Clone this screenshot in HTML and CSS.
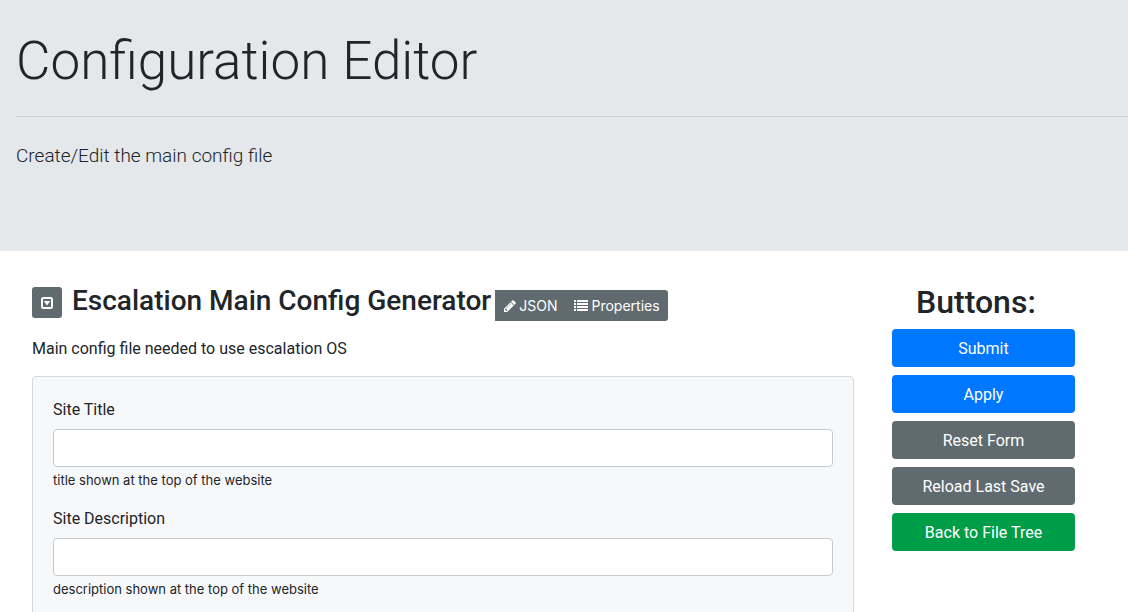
FILE: index.html
```
<!DOCTYPE html>
<html lang="en">
<head>
<meta charset="utf-8">
<title>Configuration Editor</title>
<link rel="stylesheet" href="styles.css">
</head>
<body>
<header class="jumbotron">
  <h1 class="display">Configuration Editor</h1>
  <hr class="rule">
  <p class="lead">Create/Edit the main config file</p>
</header>
<main class="layout">
  <section class="editor">
    <div class="editor-head">
      <button class="toggle" type="button" aria-label="Collapse">
        <svg class="icon" viewBox="0 0 14 14" aria-hidden="true"><rect x="2" y="2" width="10" height="10" rx="1.2" fill="none" stroke="#fff" stroke-width="2"/><path fill="#fff" d="M3.8 5h6.4L7 9.4z"/></svg>
      </button>
      <h2 class="title">Escalation Main Config Generator</h2>
      <div class="group">
        <button class="tool" type="button"><svg class="icon pencil" viewBox="0 0 1536 1536" aria-hidden="true"><path fill="#fff" d="M363 1408l91-91-235-235-91 91v107h128v128h107zM886 480q0-22-22-22-10 0-17 7L305 1007q-7 7-7 17 0 22 22 22 10 0 17-7l542-542q7-7 7-17zM832 288l416 416-832 832H0v-416zm683 96q0 53-37 90l-166 166-416-416 166-165q36-38 90-38 53 0 91 38l235 234q37 39 37 91z"/></svg>JSON</button>
        <button class="tool" type="button"><svg class="icon" viewBox="0 0 14 14" aria-hidden="true"><path fill="#fff" d="M0 1h2v2H0zM3 1h11v2H3zM0 4h2v2H0zM3 4h11v2H3zM0 7h2v2H0zM3 7h11v2H3zM0 10h2v2H0zM3 10h11v2H3z"/></svg>Properties</button>
      </div>
    </div>
    <p class="intro">Main config file needed to use escalation OS</p>
    <form class="card">
      <div class="field">
        <label class="label" for="site-title">Site Title</label>
        <input class="input" id="site-title" type="text" aria-describedby="title-help">
        <small class="help" id="title-help">title shown at the top of the website</small>
      </div>
      <div class="field">
        <label class="label" for="site-description">Site Description</label>
        <input class="input" id="site-description" type="text" aria-describedby="description-help">
        <small class="help" id="description-help">description shown at the top of the website</small>
      </div>
    </form>
  </section>
  <aside class="actions">
    <h2 class="actions-title">Buttons:</h2>
    <button class="btn primary" type="button">Submit</button>
    <button class="btn primary" type="button">Apply</button>
    <button class="btn secondary" type="button">Reset Form</button>
    <button class="btn secondary" type="button">Reload Last Save</button>
    <button class="btn success" type="button">Back to File Tree</button>
  </aside>
</main>
</body>
</html>
```
FILE: styles.css
```
* { box-sizing: border-box; }
html { overflow: hidden; }
body { margin: 0; font: 16px/24px Roboto, "Liberation Sans", sans-serif; color: #212529; background: #fff; }
h1, h2, p { margin: 0; }
button { font: inherit; color: #fff; border: 0; cursor: pointer; }
.jumbotron { background: #e4e8eb; padding: 28px 0 80px 16px; }
.display { font-size: 53px; line-height: 67px; font-weight: 300; }
.rule { margin: 21px 0 24px; border: 0; border-top: 1px solid #cbcfd2; }
.lead { font-size: 19px; line-height: 30px; font-weight: 300; }
.layout { display: flex; align-items: flex-start; gap: 38px; padding: 32px 53px 0 32px; }
.editor { flex: 1; min-width: 0; }
.editor-head { display: flex; align-items: flex-start; }
.toggle { width: 30px; height: 31px; margin: 4px 10px 0 0; padding: 0; border-radius: 3px; background: #606b70; display: flex; align-items: center; justify-content: center; }
.icon { width: 14px; height: 14px; flex: none; }
.pencil { width: 12px; height: 12px; }
.title { font-size: 28px; line-height: 36px; font-weight: 500; white-space: nowrap; }
.group { display: flex; margin: 7px 0 0 4px; border-radius: 0 3px 3px 0; overflow: hidden; background: #606b70; }
.tool { display: flex; align-items: center; gap: 3px; height: 31px; padding: 0 8px 0 9px; background: transparent; font: 14px/21px Inter, "Liberation Sans", sans-serif; }
.intro { margin-top: 16px; }
.card { margin-top: 15px; padding: 21px 20px 24px; border: 1px solid #d5d8da; border-radius: 4px; background: #f7f8fa; }
.field { margin-bottom: 17px; }
.label { display: block; margin-bottom: 7px; }
.input { display: block; width: 100%; height: 38px; padding: 6px 12px; font: inherit; border: 1px solid #c5cbd1; border-radius: 4px; background: #fff; }
.help { display: block; margin-top: 4px; font: 13px/19px Inter, "Liberation Sans", sans-serif; }
.actions { width: 183px; display: flex; flex-direction: column; gap: 8px; }
.actions-title { padding-left: 24px; font-size: 32px; line-height: 38px; font-weight: 500; }
.btn { height: 38px; padding: 2px 12px 0; border-radius: 4px; }
.primary { background: #0077ff; }
.secondary { background: #606b70; }
.success { background: #009d49; }
```
